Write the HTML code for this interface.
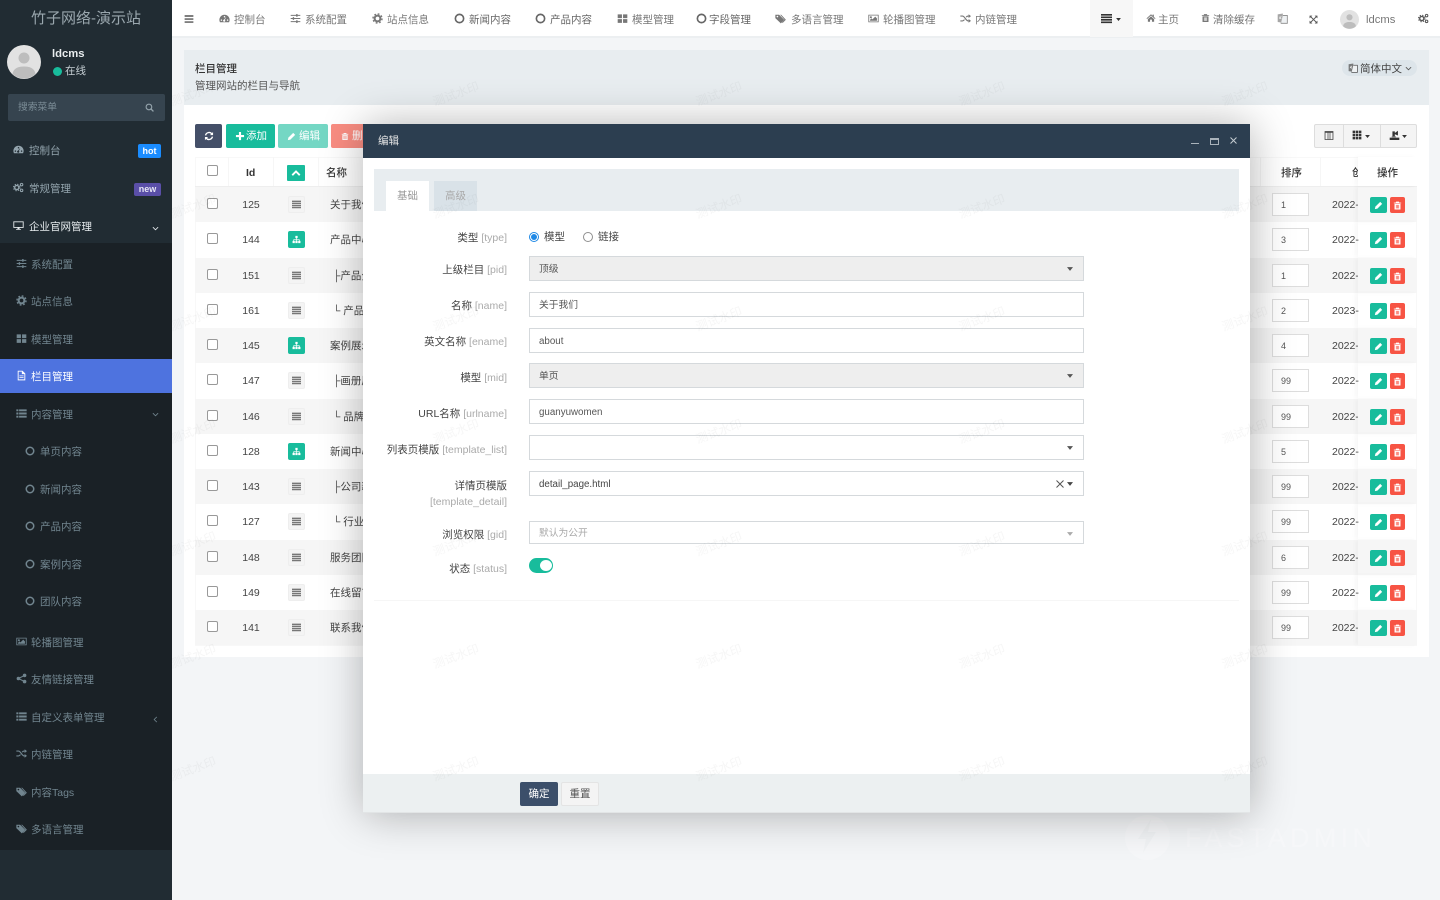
<!DOCTYPE html>
<html lang="zh-CN"><head><meta charset="utf-8"><title>栏目管理</title>
<style>
*{box-sizing:border-box}
html,body{margin:0;padding:0;width:1440px;height:900px;overflow:hidden;background:#f3f5f7;font:10.5px/1.4 "Liberation Sans","Noto Sans CJK SC",sans-serif;color:#444}
svg{display:block}
.a,.m,.t,.r,.l,.f,.r>*{position:absolute}
i,b{font-style:normal}
#side{position:absolute;left:0;top:0;width:172px;height:900px;background:#212c33}
#sub{position:absolute;left:0;top:243px;width:172px;height:607px;background:#1a2126}
.m{left:0;width:172px;height:20px;line-height:20px;margin-top:-9px;color:#93a4ad;white-space:nowrap}
.m svg{position:absolute;left:13px;top:3px;width:11px;height:11px}
.m span{position:absolute;left:29px;top:0}
.s{color:#71858f}.s svg{left:16px}.s span{left:31px}
.c svg{left:25px;width:10px;height:10px;top:4px}.c span{left:40px}
.ch{position:absolute;left:152px;top:7px;width:7px;height:7px}
.t{height:20px;line-height:20px;top:10px;color:#777;white-space:nowrap}
.t svg{position:absolute;left:0;top:3px;width:11px;height:11px}
.t span{position:absolute;top:0;left:15px}
.r{left:195px;width:1222px;height:35.25px;line-height:37px;color:#444;white-space:nowrap}
.r:nth-of-type(odd){background:#f6f6f6}
.cb{left:12px;top:11px;width:11px;height:11px;border:1px solid #999;border-radius:2px;background:#fff}
.id{left:33px;width:46px;text-align:center;font-weight:400}
.ib{left:93px;top:9px;width:17px;height:17px;border:1px solid #eee;border-radius:2px;background:#f4f4f4;color:#777;padding:3px}
.ib svg{width:9px;height:9px}
.ib.g{background:#18bc9c;border-color:#18bc9c;color:#fff}
.n{left:135px}
.so{left:1077px;top:6px;width:37px;height:23px;line-height:22px;border:1px solid #ddd;background:#fff;padding-left:8px;color:#555;font-size:9px}
.d{left:1137px}
.op{left:1163px;top:0;width:59px;height:35px;background:inherit;box-shadow:-3px 0 4px rgba(0,0,0,.03)}
.op u,.op s{position:absolute;top:10px;height:16px;border-radius:2px;color:#fff;padding:4px}
.op u{left:12px;width:17px;background:#18bc9c}.op s{left:32px;width:15px;background:#f75444;padding:4px 3px}
.op svg{width:9px;height:9px}
.v{position:absolute;top:157px;height:29px;width:1px;background:#f6f6f6}
.l{left:363px;width:144px;text-align:right;white-space:nowrap;line-height:16px;margin-top:-7px;color:#444}
.l em{font-style:normal;color:#aaa}
.f{left:529px;width:555px;height:25px;border:1px solid #d5d9dc;background:#fff;line-height:25px;padding-left:9px;font-size:9.75px;color:#555}
.f.g{background:#eee}
.f svg{position:absolute;right:10px;top:10px;width:6px;height:4px}
.btn{position:absolute;top:124px;height:24px;border-radius:2px;color:#fff;line-height:25px;text-align:center}
</style></head><body>
<svg width="0" height="0" style="position:absolute"><defs>
<symbol id="dash" viewBox="0 0 16 16"><path fill-rule="evenodd" d="M8 2.500a7.500 7.500 0 0 0-6.600 11h13.200A7.500 7.500 0 0 0 8 2.500zM3.500 9.200a1.100 1.100 0 1 0 .01 0zM8 4.400a1.100 1.100 0 1 0 .01 0zM12.500 9.200a1.100 1.100 0 1 0 .01 0zM10.600 5.700 8.600 10a1.600 1.600 0 1 1-1.200-.4z" fill="currentColor"/></symbol>
<symbol id="sli" viewBox="0 0 16 16"><path d="M1 3.500h14M1 8h14M1 12.500h14" stroke="currentColor" stroke-width="1.500"/><path d="M9 1.500h2v4H9zM4 6h2v4H4zM9 10.500h2v4H9z" fill="currentColor"/></symbol>
<symbol id="cog" viewBox="0 0 16 16"><circle cx="8" cy="8" r="4.200" fill="none" stroke="currentColor" stroke-width="3"/><circle cx="8" cy="8" r="6.600" fill="none" stroke="currentColor" stroke-width="2" stroke-dasharray="2.600 2.600"/></symbol>
<symbol id="cogs" viewBox="0 0 16 16"><circle cx="5.500" cy="8" r="3" fill="none" stroke="currentColor" stroke-width="2"/><circle cx="5.500" cy="8" r="4.700" fill="none" stroke="currentColor" stroke-width="1.600" stroke-dasharray="1.800 1.900"/><circle cx="12.500" cy="3.800" r="1.800" fill="none" stroke="currentColor" stroke-width="1.500"/><circle cx="12.500" cy="12.200" r="1.800" fill="none" stroke="currentColor" stroke-width="1.500"/></symbol>
<symbol id="o" viewBox="0 0 16 16"><circle cx="8" cy="8" r="6" fill="none" stroke="currentColor" stroke-width="2.400"/></symbol>
<symbol id="th" viewBox="0 0 16 16"><path d="M1 2h6.200v5.400H1zM8.800 2H15v5.400H8.800zM1 8.900h6.200v5.400H1zM8.800 8.900H15v5.400H8.800z" fill="currentColor"/></symbol>
<symbol id="g3" viewBox="0 0 16 16"><path d="M1 1h4v4H1zM6 1h4v4H6zM11 1h4v4h-4zM1 6h4v4H1zM6 6h4v4H6zM11 6h4v4h-4zM1 11h4v4H1zM6 11h4v4H6zM11 11h4v4h-4z" fill="currentColor"/></symbol>
<symbol id="lst" viewBox="0 0 16 16"><path d="M.5 2h3v2.800h-3zM4.500 2h11v2.800h-11zM.5 6.600h3v2.800h-3zM4.500 6.600h11v2.800h-11zM.5 11.200h3V14h-3zM4.500 11.200h11V14h-11z" fill="currentColor"/></symbol>
<symbol id="bars" viewBox="0 0 16 16"><path d="M1 2h14v2.300H1zM1 6.900h14v2.300H1zM1 11.700h14V14H1z" fill="currentColor"/></symbol>
<symbol id="bars4" viewBox="0 0 16 16"><path d="M0 1.500h16v2.400H0zM0 5.100h16v2.400H0zM0 8.700h16v2.400H0zM0 12.300h16v2.400H0z" fill="currentColor"/></symbol>
<symbol id="rows" viewBox="0 0 16 16"><path d="M0 1h16v2.500H0zM0 4.700h16v2.500H0zM0 8.400h16v2.500H0zM0 12.100h16v2.500H0z" fill="currentColor"/></symbol>
<symbol id="col" viewBox="0 0 16 16"><path fill-rule="evenodd" d="M1 1h14v14H1zM2.300 3.500v10.200h3.500V3.500zM7 3.500v10.200h2V3.500zM10.200 3.500v10.200h3.500V3.500z" fill="currentColor"/></symbol>
<symbol id="expo" viewBox="0 0 16 16"><path d="M1 11h14v3.500H1zM5 2h3.500v7H5z" fill="currentColor"/><path d="M7 5.500 13 1v7z" fill="currentColor"/><path d="M4 9.500h6v1H4z" fill="currentColor"/></symbol>
<symbol id="map" viewBox="0 0 16 16"><path d="M6 1.500h4v4H6zM1 10.500h4v4H1zM6 10.500h4v4H6zM11 10.500h4v4h-4zM7.400 5.500h1.200v2.300H13.600v2.700h-1.200V9H8.600v1.500H7.400V9H3.600v1.500H2.400V7.800h5z" fill="currentColor"/></symbol>
<symbol id="img" viewBox="0 0 16 16"><path fill-rule="evenodd" d="M.5 2.500h15v11H.5zM1.700 3.700v8.600h12.600V3.700zM4.200 4.700a1.500 1.500 0 1 1-.01 0zM3 11.300V9.800l2-2 1.500 1.500 4-4 2.500 2.500v3.500z" fill="currentColor"/></symbol>
<symbol id="sh" viewBox="0 0 16 16"><circle cx="12.500" cy="3.500" r="2.600" fill="currentColor"/><circle cx="12.500" cy="12.500" r="2.600" fill="currentColor"/><circle cx="3.500" cy="8" r="2.600" fill="currentColor"/><path d="M3.500 8l9-4.500M3.500 8l9 4.500" stroke="currentColor" stroke-width="1.500"/></symbol>
<symbol id="rnd" viewBox="0 0 16 16"><path d="M.5 4.500h3c3.500 0 5 7 8.500 7h1M.5 11.500h3c1.300 0 2.200-.9 3-2M9 6c.8-.9 1.800-1.500 3-1.500h1" fill="none" stroke="currentColor" stroke-width="1.700"/><path d="M12.500 1.800 16 4.500l-3.500 2.700zM12.500 8.800l3.500 2.700-3.500 2.700z" fill="currentColor"/></symbol>
<symbol id="tag" viewBox="0 0 16 16"><path fill-rule="evenodd" d="M.5 2.500h5.500l7.500 7.500-5 5-8-7.500zM3.500 4a1.200 1.200 0 1 0 .01 0z" fill="currentColor"/><path d="M7.500 2.500h1.500l6.800 7.300-4.700 4.700-.9-.9 3.600-3.800z" fill="currentColor"/></symbol>
<symbol id="file" viewBox="0 0 16 16"><path fill-rule="evenodd" d="M2.500 1h7l4 4v10h-11zM3.800 2.300v11.400h8.400V6H8.500V2.300zM5 8h6v1.100H5zM5 10.400h6v1.100H5z" fill="currentColor"/></symbol>
<symbol id="desk" viewBox="0 0 16 16"><path fill-rule="evenodd" d="M.5 2h15v9.500h-6v1.500H11.500v1.200h-7V13h2v-1.500h-6zM1.800 3.300v6.900h12.400V3.300z" fill="currentColor"/></symbol>
<symbol id="home" viewBox="0 0 16 16"><path d="M8 2 .8 8.500l.9 1L8 4l6.300 5.500.9-1-2.700-2.400V2.500h-2v1.900zM3 9.700 8 5.400l5 4.300V14H9.500v-3.500h-3V14H3z" fill="currentColor"/></symbol>
<symbol id="tr" viewBox="0 0 16 16"><path fill-rule="evenodd" d="M5.500 1h5l.8 1.800H14.500v1.500h-13V2.800h3.200zM2.700 5.200h10.600V15H2.700zM5.200 6.800v6.400h1.200V6.800zM7.400 6.800v6.400h1.200V6.800zM9.600 6.800v6.400h1.200V6.800z" fill="currentColor"/></symbol>
<symbol id="lang" viewBox="0 0 16 16"><path d="M1 2 8.500 .8v13.400L1 13z" fill="currentColor" opacity=".75"/><path d="M8.500 3.500H15v11.500H6v-1" fill="#eef1f3" stroke="currentColor" stroke-width="1.200"/><path d="M3 8c1.500-.3 2.500-1.500 3-3.500M3.500 5.500c.5 1.500 1.500 2.500 2.800 3" stroke="#fff" stroke-width=".9" fill="none"/></symbol>
<symbol id="exp" viewBox="0 0 16 16"><path d="M3 3l10 10M13 3 3 13" stroke="currentColor" stroke-width="1.800"/><path d="M1 1h5L1 6zM15 1h-5l5 5zM1 15h5l-5-5zM15 15h-5l5-5z" fill="currentColor"/></symbol>
<symbol id="pen" viewBox="0 0 16 16"><path d="M11 1.500 14.500 5 6 13.500l-4.500 1 1-4.500z" fill="currentColor"/></symbol>
<symbol id="rf" viewBox="0 0 16 16"><path d="M2.500 7a5.700 5.700 0 0 1 10-2.500M13.500 9a5.700 5.700 0 0 1-10 2.500" fill="none" stroke="currentColor" stroke-width="2.200"/><path d="M14.500 1.500v5h-5zM1.500 14.500v-5h5z" fill="currentColor"/></symbol>
<symbol id="chev" viewBox="0 0 16 16"><path d="M2 5l6 6 6-6" fill="none" stroke="currentColor" stroke-width="2"/></symbol>
<symbol id="chl" viewBox="0 0 16 16"><path d="M11 2 5 8l6 6" fill="none" stroke="currentColor" stroke-width="2"/></symbol>
<symbol id="car" viewBox="0 0 8 5"><path d="M0 0h8L4 5z" fill="currentColor"/></symbol>
<symbol id="srch" viewBox="0 0 16 16"><circle cx="7" cy="7" r="5" fill="none" stroke="currentColor" stroke-width="2"/><path d="M10.500 10.500 15 15" stroke="currentColor" stroke-width="2.400"/></symbol>
<symbol id="up" viewBox="0 0 16 16"><path d="M2 11.500 8 5.500l6 6" fill="none" stroke="currentColor" stroke-width="3"/></symbol>
<symbol id="plus" viewBox="0 0 16 16"><path d="M6.300 1.500h3.400v4.800h4.800v3.400H9.700v4.800H6.300V9.700H1.500V6.300h4.800z" fill="currentColor"/></symbol>
<symbol id="usr" viewBox="0 0 34 34"><circle cx="17" cy="17" r="17" fill="#e2e2e2"/><circle cx="17" cy="13" r="5.500" fill="#bdbdbd"/><path d="M5.500 29c1-6 6-7.500 11.500-7.500S27.500 23 28.500 29a17 17 0 0 1-23 0z" fill="#bdbdbd"/></symbol>
</defs></svg>

<!-- top bar -->
<div class="a" style="left:172px;top:0;width:1268px;height:38px;background:#fff;border-bottom:2px solid #eceff1"></div>
<div class="a" style="left:1090px;top:0;width:43px;height:37px;background:#f7f7f7"></div>
<div class="t" style="left:184px"><svg style="color:#555;top:4px;width:10px;height:10px"><use href="#bars"/></svg></div>
<div class="t" style="left:219px"><svg><use href="#dash"/></svg><span>控制台</span></div>
<div class="t" style="left:290px"><svg><use href="#sli"/></svg><span>系统配置</span></div>
<div class="t" style="left:372px"><svg><use href="#cog"/></svg><span>站点信息</span></div>
<div class="t" style="left:454px;color:#666"><svg><use href="#o"/></svg><span>新闻内容</span></div>
<div class="t" style="left:535px;color:#666"><svg><use href="#o"/></svg><span>产品内容</span></div>
<div class="t" style="left:617px"><svg><use href="#th"/></svg><span>模型管理</span></div>
<div class="t" style="left:696px;color:#666"><svg><use href="#o"/></svg><span style="left:13px">字段管理</span></div>
<div class="t" style="left:775px"><svg><use href="#tag"/></svg><span style="left:16px">多语言管理</span></div>
<div class="t" style="left:868px"><svg><use href="#img"/></svg><span>轮播图管理</span></div>
<div class="t" style="left:960px"><svg><use href="#rnd"/></svg><span>内链管理</span></div>
<div class="t" style="left:1101px;color:#333"><svg style="top:3px"><use href="#bars4"/></svg><svg style="left:15px;top:8px;width:5px;height:3px"><use href="#car"/></svg></div>
<div class="t" style="left:1146px"><svg style="width:10px;height:10px"><use href="#home"/></svg><span style="left:12px">主页</span></div>
<div class="t" style="left:1201px"><svg style="width:9px;height:10px"><use href="#tr"/></svg><span style="left:12px">清除缓存</span></div>
<div class="t" style="left:1277px;color:#888"><svg><use href="#lang"/></svg></div>
<div class="t" style="left:1309px;color:#555"><svg style="width:9px;height:9px;top:5px"><use href="#exp"/></svg></div>
<svg class="a" style="left:1340px;top:10px;width:19px;height:19px"><use href="#usr"/></svg>
<div class="t" style="left:1366px;font-size:11.250px">ldcms</div>
<div class="t" style="left:1418px;color:#555"><svg><use href="#cogs"/></svg></div>

<!-- panel -->
<div class="a" style="left:184px;top:50px;width:1245px;height:607px;background:#fff"></div>
<div class="a" style="left:184px;top:50px;width:1245px;height:55px;background:#e8edf0"></div>
<div class="a" style="left:195px;top:62px;color:#333;font-weight:500">栏目管理</div>
<div class="a" style="left:195px;top:79px;color:#555">管理网站的栏目与导航</div>
<div class="a" style="left:1342px;top:60px;width:75px;height:16px;border-radius:8px;background:#dde5ea"></div>
<svg class="a" style="left:1348px;top:63px;width:10px;height:10px;color:#555"><use href="#lang"/></svg>
<div class="a" style="left:1360px;top:62px;color:#444">简体中文</div>
<svg class="a" style="left:1405px;top:65px;width:7px;height:7px;color:#555"><use href="#chev"/></svg>

<div class="btn" style="left:195px;width:27px;background:#444f68"><svg style="margin:7px auto;width:10px;height:10px"><use href="#rf"/></svg></div>
<div class="btn" style="left:226px;width:49px;background:#18bc9c"><svg class="a" style="left:9px;top:7px;width:10px;height:10px"><use href="#plus"/></svg><span class="a" style="left:20px">添加</span></div>
<div class="btn" style="left:278px;width:50px;background:#74d7c4"><svg class="a" style="left:9px;top:8px;width:9px;height:9px"><use href="#pen"/></svg><span class="a" style="left:21px">编辑</span></div>
<div class="btn" style="left:331px;width:50px;background:#f98d82"><svg class="a" style="left:10px;top:8px;width:8px;height:9px"><use href="#tr"/></svg><span class="a" style="left:21px">删除</span></div>

<div class="a" style="left:1314px;top:124px;width:103px;height:24px;background:#f4f4f4;border:1px solid #ddd;border-radius:2px;color:#444"></div>
<div class="a" style="left:1343px;top:124px;width:1px;height:24px;background:#ddd"></div>
<div class="a" style="left:1380px;top:124px;width:1px;height:24px;background:#ddd"></div>
<svg class="a" style="left:1324px;top:130px;width:10px;height:11px;color:#444"><use href="#col"/></svg>
<svg class="a" style="left:1352px;top:130px;width:10px;height:10px;color:#333"><use href="#g3"/></svg>
<svg class="a" style="left:1365px;top:135px;width:5px;height:3px;color:#333"><use href="#car"/></svg>
<svg class="a" style="left:1389px;top:130px;width:11px;height:11px;color:#333"><use href="#expo"/></svg>
<svg class="a" style="left:1402px;top:135px;width:5px;height:3px;color:#333"><use href="#car"/></svg>

<!-- table -->
<div class="a" style="left:195px;top:157px;width:1222px;height:489px;border:1px solid #f8f8f8"></div>
<div class="a" style="left:195px;top:186px;width:1222px;height:1px;background:#eee"></div>
<div class="a" style="left:207px;top:165px;width:11px;height:11px;border:1px solid #999;border-radius:2px;background:#fff"></div>
<b class="a" style="left:246px;top:165px;color:#333;line-height:16px">Id</b>
<div class="a" style="left:287px;top:165px;width:18px;height:16px;background:#18bc9c;border-radius:1px;color:#fff;padding:3px 4px"><svg style="width:10px;height:10px"><use href="#up"/></svg></div>
<b class="a" style="left:326px;top:165px;color:#333;line-height:16px;font-weight:500">名称</b>
<b class="a" style="left:1281px;top:165px;color:#333;line-height:16px;font-weight:500">排序</b>
<b class="a" style="left:1352px;top:165px;color:#333;line-height:16px;font-weight:500">创建</b>
<div class="v" style="left:228px"></div><div class="v" style="left:273px"></div><div class="v" style="left:318px"></div><div class="v" style="left:1260px"></div><div class="v" style="left:1320px"></div>
<div style="position:absolute;left:0;top:0">
<div class="r" style="top:187px"><i class="cb"></i><b class="id">125</b><i class="ib"><svg><use href="#rows"/></svg></i><span class="n">关于我们</span><i class="so">1</i><span class="d">2022-</span><i class="op"><u><svg><use href="#pen"/></svg></u><s><svg><use href="#tr"/></svg></s></i></div>
<div class="r" style="top:222.250px"><i class="cb"></i><b class="id">144</b><i class="ib g"><svg><use href="#map"/></svg></i><span class="n">产品中心</span><i class="so">3</i><span class="d">2022-</span><i class="op"><u><svg><use href="#pen"/></svg></u><s><svg><use href="#tr"/></svg></s></i></div>
<div class="r" style="top:257.500px"><i class="cb"></i><b class="id">151</b><i class="ib"><svg><use href="#rows"/></svg></i><span class="n">&nbsp;├产品分类</span><i class="so">1</i><span class="d">2022-</span><i class="op"><u><svg><use href="#pen"/></svg></u><s><svg><use href="#tr"/></svg></s></i></div>
<div class="r" style="top:292.750px"><i class="cb"></i><b class="id">161</b><i class="ib"><svg><use href="#rows"/></svg></i><span class="n">&nbsp;└&nbsp;产品列表</span><i class="so">2</i><span class="d">2023-</span><i class="op"><u><svg><use href="#pen"/></svg></u><s><svg><use href="#tr"/></svg></s></i></div>
<div class="r" style="top:328px"><i class="cb"></i><b class="id">145</b><i class="ib g"><svg><use href="#map"/></svg></i><span class="n">案例展示</span><i class="so">4</i><span class="d">2022-</span><i class="op"><u><svg><use href="#pen"/></svg></u><s><svg><use href="#tr"/></svg></s></i></div>
<div class="r" style="top:363.250px"><i class="cb"></i><b class="id">147</b><i class="ib"><svg><use href="#rows"/></svg></i><span class="n">&nbsp;├画册展示</span><i class="so">99</i><span class="d">2022-</span><i class="op"><u><svg><use href="#pen"/></svg></u><s><svg><use href="#tr"/></svg></s></i></div>
<div class="r" style="top:398.500px"><i class="cb"></i><b class="id">146</b><i class="ib"><svg><use href="#rows"/></svg></i><span class="n">&nbsp;└&nbsp;品牌案例</span><i class="so">99</i><span class="d">2022-</span><i class="op"><u><svg><use href="#pen"/></svg></u><s><svg><use href="#tr"/></svg></s></i></div>
<div class="r" style="top:433.750px"><i class="cb"></i><b class="id">128</b><i class="ib g"><svg><use href="#map"/></svg></i><span class="n">新闻中心</span><i class="so">5</i><span class="d">2022-</span><i class="op"><u><svg><use href="#pen"/></svg></u><s><svg><use href="#tr"/></svg></s></i></div>
<div class="r" style="top:469px"><i class="cb"></i><b class="id">143</b><i class="ib"><svg><use href="#rows"/></svg></i><span class="n">&nbsp;├公司新闻</span><i class="so">99</i><span class="d">2022-</span><i class="op"><u><svg><use href="#pen"/></svg></u><s><svg><use href="#tr"/></svg></s></i></div>
<div class="r" style="top:504.250px"><i class="cb"></i><b class="id">127</b><i class="ib"><svg><use href="#rows"/></svg></i><span class="n">&nbsp;└&nbsp;行业资讯</span><i class="so">99</i><span class="d">2022-</span><i class="op"><u><svg><use href="#pen"/></svg></u><s><svg><use href="#tr"/></svg></s></i></div>
<div class="r" style="top:539.500px"><i class="cb"></i><b class="id">148</b><i class="ib"><svg><use href="#rows"/></svg></i><span class="n">服务团队</span><i class="so">6</i><span class="d">2022-</span><i class="op"><u><svg><use href="#pen"/></svg></u><s><svg><use href="#tr"/></svg></s></i></div>
<div class="r" style="top:574.750px"><i class="cb"></i><b class="id">149</b><i class="ib"><svg><use href="#rows"/></svg></i><span class="n">在线留言</span><i class="so">99</i><span class="d">2022-</span><i class="op"><u><svg><use href="#pen"/></svg></u><s><svg><use href="#tr"/></svg></s></i></div>
<div class="r" style="top:610px"><i class="cb"></i><b class="id">141</b><i class="ib"><svg><use href="#rows"/></svg></i><span class="n">联系我们</span><i class="so">99</i><span class="d">2022-</span><i class="op"><u><svg><use href="#pen"/></svg></u><s><svg><use href="#tr"/></svg></s></i></div>
</div>
<div class="a" style="left:1358px;top:157px;width:59px;height:29px;background:#fff;box-shadow:-3px 0 4px rgba(0,0,0,.03)"></div>
<b class="a" style="left:1377px;top:165px;color:#333;line-height:16px;font-weight:500">操作</b>

<!-- faint logo -->
<div class="a" style="left:1125px;top:815px;width:45px;height:45px;border-radius:50%;background:#f6f7f9"></div>
<svg class="a" style="left:1135px;top:818px;width:24px;height:38px"><path d="M16 1 3 21h8l-3 14 13-21h-8z" fill="#f1f3f5"/></svg>
<div class="a" style="left:1185px;top:822px;font-size:27px;line-height:32px;letter-spacing:4.300px;color:#f6f7f9">FASTADMIN</div>

<!-- modal -->
<div class="a" style="left:363px;top:124px;width:887px;height:689px;background:#fff;box-shadow:1px 1px 40px rgba(0,0,0,.3)">
<div class="a" style="left:0;top:0;width:887px;height:33.500px;background:#2c3e50"></div>
<div class="a" style="left:15px;top:10px;color:#e6e6e6">编辑</div>
<div class="a" style="left:828px;top:19px;width:8px;height:1px;background:#aab3bb"></div>
<div class="a" style="left:847px;top:14px;width:9px;height:7px;border:1px solid #aab3bb;border-top-width:2px"></div>
<svg class="a" style="left:867px;top:13px;width:7px;height:7px;color:#c4cbd1"><path d="M.5.500l6 6M6.500.500l-6 6" stroke="currentColor"/></svg>
<div class="a" style="left:11px;top:45px;width:865px;height:42px;background:#e8edf0"></div>
<div class="a" style="left:23px;top:57px;width:43px;height:30px;background:#fff;line-height:30px;text-align:center;color:#999">基础</div>
<div class="a" style="left:71px;top:57px;width:43px;height:30px;background:#d9e2e8;line-height:30px;text-align:center;color:#aaa">高级</div>
<div class="a" style="left:0;top:650px;width:887px;height:39px;background:#ecf0f1;border-bottom:1px solid #e2e5e6"></div>
<div class="a" style="left:157px;top:658px;width:38px;height:24px;background:#3c4f6a;border-radius:2px;color:#fff;line-height:25px;text-align:center">确定</div>
<div class="a" style="left:198px;top:658px;width:38px;height:24px;background:#f4f4f4;border:1px solid #e4e4e4;border-radius:2px;color:#555;line-height:23px;text-align:center">重置</div>
<div class="a" style="left:11px;top:476px;width:865px;height:1px;background:#f6f6f6"></div>
</div>
<div class="l" style="top:237px">类型 <em>[type]</em></div>
<div class="a" style="left:529px;top:232px;width:10px;height:10px;border-radius:50%;border:1px solid #1e88e5;background:#fff"></div>
<div class="a" style="left:531px;top:234px;width:6px;height:6px;border-radius:50%;background:#1e88e5"></div>
<div class="a" style="left:544px;top:230px;color:#444">模型</div>
<div class="a" style="left:583px;top:232px;width:10px;height:10px;border-radius:50%;border:1px solid #8f8f8f;background:#fff"></div>
<div class="a" style="left:598px;top:230px;color:#444">链接</div>
<div class="l" style="top:269px">上级栏目 <em>[pid]</em></div>
<div class="f g" style="top:256px">顶级<svg><use href="#car"/></svg></div>
<div class="l" style="top:305px">名称 <em>[name]</em></div>
<div class="f" style="top:292px">关于我们</div>
<div class="l" style="top:341px">英文名称 <em>[ename]</em></div>
<div class="f" style="top:328px">about</div>
<div class="l" style="top:377px">模型 <em>[mid]</em></div>
<div class="f g" style="top:363px">单页<svg><use href="#car"/></svg></div>
<div class="l" style="top:413px">URL名称 <em>[urlname]</em></div>
<div class="f" style="top:399px">guanyuwomen</div>
<div class="l" style="top:449px">列表页模版 <em>[template_list]</em></div>
<div class="f" style="top:435px"><svg><use href="#car"/></svg></div>
<div class="l" style="top:485px">详情页模版</div>
<div class="l" style="top:501px"><em>[template_detail]</em></div>
<div class="f" style="top:471px;color:#444">detail_page.html<svg style="right:19px;top:8px;width:8px;height:8px;color:#555"><path d="M.5.500l7 7M7.500.500l-7 7" stroke="currentColor"/></svg><svg><use href="#car"/></svg></div>
<div class="l" style="top:534px">浏览权限 <em>[gid]</em></div>
<div class="f" style="top:521px;height:23px;line-height:24px;color:#aaa">默认为公开<svg><use href="#car"/></svg></div>
<div class="l" style="top:568px">状态 <em>[status]</em></div>
<div class="a" style="left:529px;top:558px;width:24px;height:15px;border-radius:8px;background:#18bc9c"></div>
<div class="a" style="left:540px;top:560px;width:12px;height:11px;border-radius:50%;background:#fff"></div>

<!-- sidebar -->
<div id="side">
<div id="sub"></div>
<div class="a" style="left:0;top:8px;width:172px;text-align:center;font-size:15px;line-height:22px;color:#9aa7ae">竹子网络-演示站</div>
<svg class="a" style="left:7px;top:45px;width:34px;height:34px"><use href="#usr"/></svg>
<div class="a" style="left:52px;top:47px;font-size:11.250px;color:#e8ecee;font-weight:700">ldcms</div>
<div class="a" style="left:53px;top:67px;width:9px;height:9px;border-radius:50%;background:#18bc9c"></div>
<div class="a" style="left:65px;top:64px;color:#c5ced3">在线</div>
<div class="a" style="left:8px;top:94px;width:157px;height:27px;background:#36444f;border-radius:2px"></div>
<div class="a" style="left:18px;top:101px;font-size:9.750px;color:#7b8c96">搜索菜单</div>
<svg class="a" style="left:145px;top:103px;width:9px;height:9px;color:#94a3ab"><use href="#srch"/></svg>
<div class="m" style="top:150px"><svg><use href="#dash"/></svg><span>控制台</span></div>
<div class="a" style="left:138px;top:144px;width:23px;height:14px;background:#1a8cff;border-radius:2px;color:#fff;font-weight:700;font-size:9px;line-height:14px;text-align:center">hot</div>
<div class="m" style="top:188px"><svg><use href="#cogs"/></svg><span>常规管理</span></div>
<div class="a" style="left:134px;top:183px;width:27px;height:13px;background:#5a4fa8;border-radius:2px;color:#e6e6f4;font-weight:700;font-size:9px;line-height:13px;text-align:center">new</div>
<div class="m" style="top:226px;color:#e4e9ec"><svg><use href="#desk"/></svg><span>企业官网管理</span><svg class="ch" style="left:152px;top:8px;width:7px;height:7px"><use href="#chev"/></svg></div>
<div class="m s" style="top:264px"><svg><use href="#sli"/></svg><span>系统配置</span></div>
<div class="m s" style="top:301px"><svg><use href="#cog"/></svg><span>站点信息</span></div>
<div class="m s" style="top:339px"><svg><use href="#th"/></svg><span>模型管理</span></div>
<div class="a" style="left:0;top:359px;width:172px;height:34px;background:#4e73df"></div>
<div class="m s" style="top:376px;color:#fff"><svg><use href="#file"/></svg><span>栏目管理</span></div>
<div class="m s" style="top:414px"><svg><use href="#lst"/></svg><span>内容管理</span><svg class="ch" style="top:6px;left:152px;width:7px;height:7px"><use href="#chev"/></svg></div>
<div class="m s c" style="top:451px"><svg><use href="#o"/></svg><span>单页内容</span></div>
<div class="m s c" style="top:489px"><svg><use href="#o"/></svg><span>新闻内容</span></div>
<div class="m s c" style="top:526px"><svg><use href="#o"/></svg><span>产品内容</span></div>
<div class="m s c" style="top:564px"><svg><use href="#o"/></svg><span>案例内容</span></div>
<div class="m s c" style="top:601px"><svg><use href="#o"/></svg><span>团队内容</span></div>
<div class="m s" style="top:642px"><svg><use href="#img"/></svg><span>轮播图管理</span></div>
<div class="m s" style="top:679px"><svg><use href="#sh"/></svg><span>友情链接管理</span></div>
<div class="m s" style="top:717px"><svg><use href="#lst"/></svg><span>自定义表单管理</span><svg class="ch" style="top:8px;left:152px;width:7px;height:7px"><use href="#chl"/></svg></div>
<div class="m s" style="top:754px"><svg><use href="#rnd"/></svg><span>内链管理</span></div>
<div class="m s" style="top:792px"><svg><use href="#tag"/></svg><span>内容Tags</span></div>
<div class="m s" style="top:829px"><svg><use href="#tag"/></svg><span>多语言管理</span></div>
</div>

<!-- watermark -->
<svg class="a" style="left:0;top:0;pointer-events:none" width="1440" height="900">
<defs><pattern id="wm" patternUnits="userSpaceOnUse" x="62" y="38" width="263" height="112.500">
<text x="131" y="60" text-anchor="middle" transform="rotate(-20 131 56)" font-size="12" fill="#000" fill-opacity=".035" font-family="Liberation Sans,Noto Sans CJK SC,sans-serif">测试水印</text>
</pattern></defs>
<rect x="172" y="38" width="1268" height="790" fill="url(#wm)"/>
</svg>
</body></html>
